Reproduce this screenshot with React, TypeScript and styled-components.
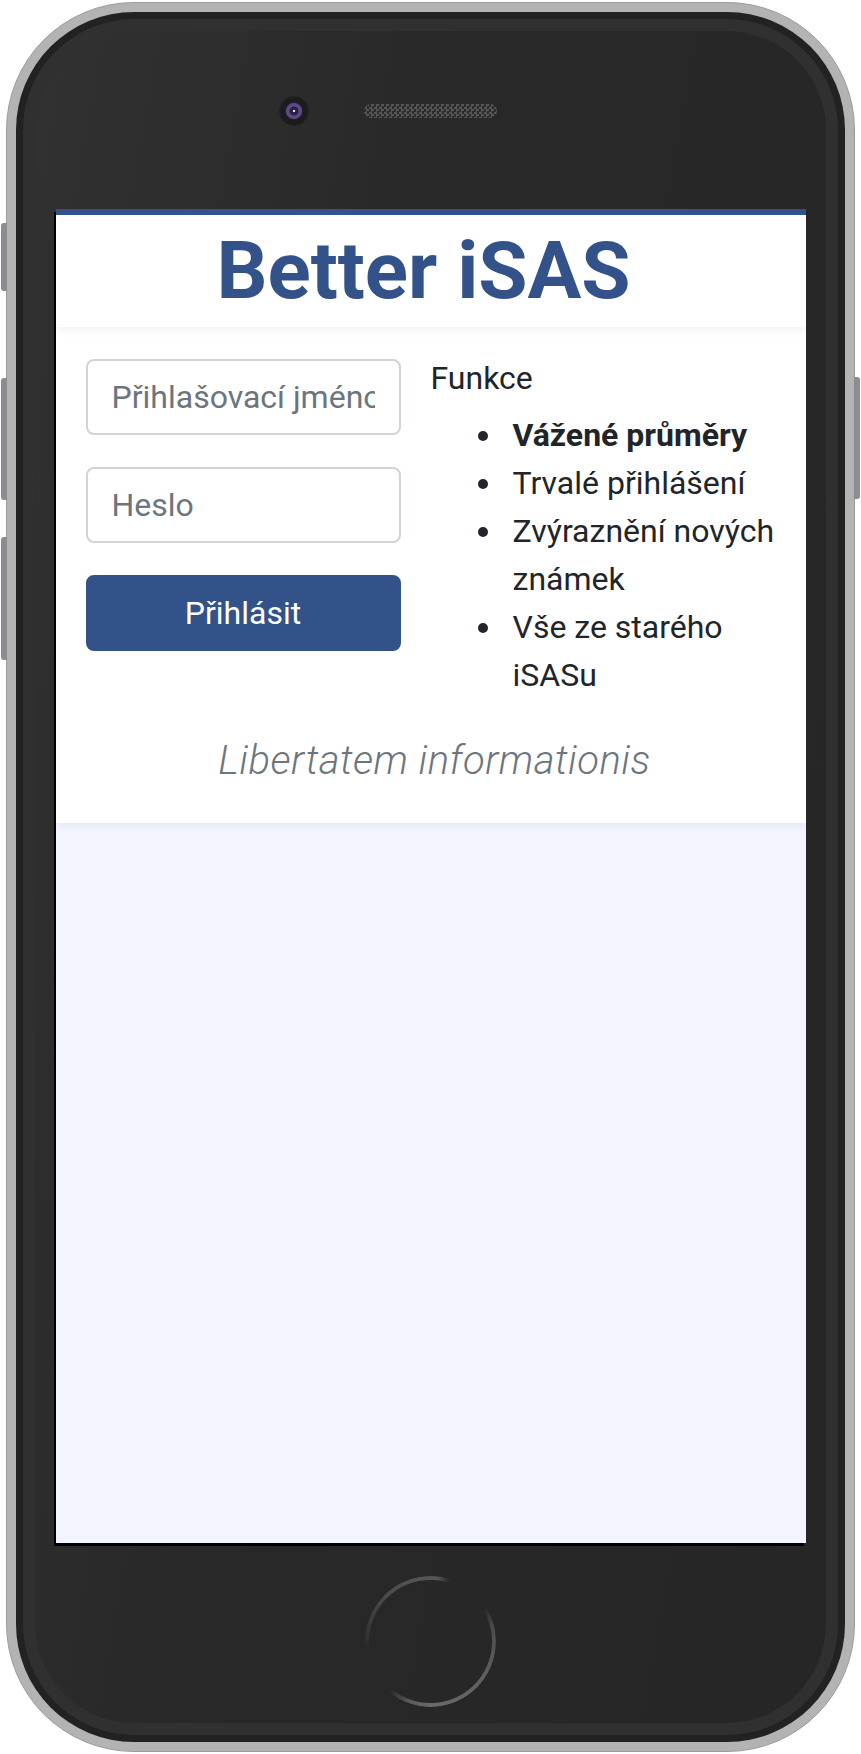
import styled, { createGlobalStyle } from "styled-components";

const GlobalStyle = createGlobalStyle`
  html, body {
    margin: 0;
    padding: 0;
    background: #fff;
  }
  * {
    box-sizing: border-box;
  }
`;

const brand = "#33528a";

const Stage = styled.div`
  padding: 2px 0 0 6px;
`;

// outer aluminium rim of the phone
const Rim = styled.div`
  position: relative;
  width: 849px;
  height: 1750px;
  padding: 9px;
  border: 1px solid #9c9c9c;
  border-radius: 128px;
  background: #b3b3b3;
`;

const SideKey = styled.div<{ $side: "left" | "right"; $top: number; $height: number }>`
  position: absolute;
  top: ${(p) => p.$top}px;
  ${(p) => (p.$side === "left" ? "left: -6px;" : "right: -6px;")}
  width: 6px;
  height: ${(p) => p.$height}px;
  border-radius: ${(p) => (p.$side === "left" ? "3px 0 0 3px" : "0 3px 3px 0")};
  background: #8d8d91;
`;

const Body = styled.div`
  height: 100%;
  padding: 7px;
  border-radius: 118px;
  background: #222;
`;

const Bezel = styled.div`
  height: 100%;
  padding: 12px;
  border-radius: 111px;
  background: #303030;
`;

const Face = styled.div`
  height: 100%;
  border-radius: 99px;
  background: linear-gradient(100deg, #313131 0%, #282828 40%, #262626 100%);
  display: flex;
  flex-direction: column;
`;

const TopBar = styled.div`
  height: 178px;
  padding-top: 65px;
  display: flex;
  justify-content: center;
  align-items: flex-start;
`;

const SensorRow = styled.div`
  display: flex;
  align-items: center;
  gap: 55px;
  height: 30px;
`;

const Camera = styled.div`
  width: 30px;
  height: 30px;
  border-radius: 50%;
  background: radial-gradient(
    circle,
    #e0d8f0 0 1.2px,
    #2a2140 1.6px 4px,
    #5a4a86 5px 7.5px,
    #241d33 8.5px,
    #1c1c1c 9.5px 13px,
    #232323 15px
  );
`;

const Speaker = styled.div`
  width: 133px;
  height: 14px;
  border-radius: 7px;
  background: repeating-conic-gradient(#5a5a5a 0 25%, #2d2d2d 0 50%) 0 0 / 5px 5px;
  opacity: 0.9;
`;

const Spacer = styled.div`
  width: 30px;
`;

const BottomBar = styled.div`
  flex: 1;
  display: flex;
  justify-content: center;
  padding-top: 33px;
`;

const HomeButton = styled.div`
  width: 131px;
  height: 131px;
  border-radius: 50%;
  background: conic-gradient(
    #555 0deg,
    #555 6deg,
    transparent 18deg,
    transparent 58deg,
    #4a4a4a 75deg,
    #5e5e5e 120deg,
    #6a6a6a 180deg,
    #5a5a5a 200deg,
    transparent 220deg,
    transparent 262deg,
    #333 275deg,
    #4c4c4c 320deg,
    #555 360deg
  );
  -webkit-mask: radial-gradient(circle, transparent 61px, #000 62px);
  mask: radial-gradient(circle, transparent 61px, #000 62px);
`;

// the web page shown on the phone (rendered at 2x)
const Screen = styled.div`
  width: 750px;
  height: 1334px;
  margin: 0 auto;
  background: #f2f5fd;
  box-shadow: -2px 3px 0 #000;
  overflow: hidden;
  font-family: Roboto, "Liberation Sans", sans-serif;
  color: #212529;
`;

const Header = styled.header`
  position: relative;
  z-index: 1;
  padding: 8px 22px 8px 8px;
  border-top: 6px solid ${brand};
  background: #fff;
  box-shadow: 0 4px 8px rgba(0, 0, 0, 0.05);
`;

const Title = styled.h1`
  margin: 0;
  font-size: 80px;
  font-weight: 700;
  line-height: 1.2;
  text-align: center;
  color: ${brand};
`;

const Card = styled.main`
  padding: 32px 0;
  background: #fff;
  box-shadow: 0 4px 8px rgba(0, 0, 0, 0.05);
`;

const Row = styled.div`
  display: flex;
`;

const Col = styled.div<{ $side: "left" | "right" }>`
  flex: 0 0 50%;
  min-width: 0;
  padding: ${(p) => (p.$side === "left" ? "0 30px" : "0 30px 0 0")};
`;

const Input = styled.input`
  display: block;
  width: 100%;
  height: 76px;
  margin: 0 0 32px;
  padding: 12px 24px;
  border: 2px solid #ced4da;
  border-radius: 8px;
  background: #fff;
  font-family: inherit;
  font-size: 32px;
  line-height: 1.5;
  color: #495057;
  outline: none;

  &::placeholder {
    color: #6c757d;
    opacity: 1;
  }
`;

const LoginButton = styled.button`
  display: block;
  width: 100%;
  height: 76px;
  padding: 12px 24px;
  border: 2px solid ${brand};
  border-radius: 8px;
  background: ${brand};
  font-family: inherit;
  font-size: 32px;
  line-height: 1.5;
  color: #fff;
  cursor: pointer;
`;

const FeatureLabel = styled.p`
  margin: 0 0 14px;
  font-size: 32px;
  line-height: 1.2;
`;

const FeatureList = styled.ul`
  margin: 0 0 32px;
  padding-left: 74px;
  font-size: 32px;
  line-height: 48px;

  li {
    padding-left: 8px;
  }
`;

const Motto = styled.p`
  margin: 0;
  padding-left: 8px;
  font-size: 40px;
  font-weight: 300;
  font-style: italic;
  letter-spacing: 0.5px;
  line-height: 1.5;
  text-align: center;
  color: #6c757d;
`;

const features = [
  { text: "Vážené průměry", bold: true },
  { text: "Trvalé přihlášení" },
  { text: "Zvýraznění nových známek" },
  { text: "Vše ze starého iSASu" },
];

export default function App() {
  return (
    <Stage>
      <GlobalStyle />
      <Rim>
        <SideKey $side="left" $top={220} $height={68} />
        <SideKey $side="left" $top={375} $height={122} />
        <SideKey $side="left" $top={534} $height={123} />
        <SideKey $side="right" $top={374} $height={122} />
        <Body>
          <Bezel>
            <Face>
              <TopBar>
                <SensorRow>
                  <Camera />
                  <Speaker />
                  <Spacer />
                </SensorRow>
              </TopBar>
              <Screen>
                <Header>
                  <Title>Better iSAS</Title>
                </Header>
                <Card>
                  <Row>
                    <Col $side="left">
                      <Input type="text" placeholder="Přihlašovací jméno" />
                      <Input type="password" placeholder="Heslo" />
                      <LoginButton type="button">Přihlásit</LoginButton>
                    </Col>
                    <Col $side="right">
                      <FeatureLabel>Funkce</FeatureLabel>
                      <FeatureList>
                        {features.map((f) => (
                          <li key={f.text}>{f.bold ? <b>{f.text}</b> : f.text}</li>
                        ))}
                      </FeatureList>
                    </Col>
                  </Row>
                  <Motto>Libertatem informationis</Motto>
                </Card>
              </Screen>
              <BottomBar>
                <HomeButton />
              </BottomBar>
            </Face>
          </Bezel>
        </Body>
      </Rim>
    </Stage>
  );
}
